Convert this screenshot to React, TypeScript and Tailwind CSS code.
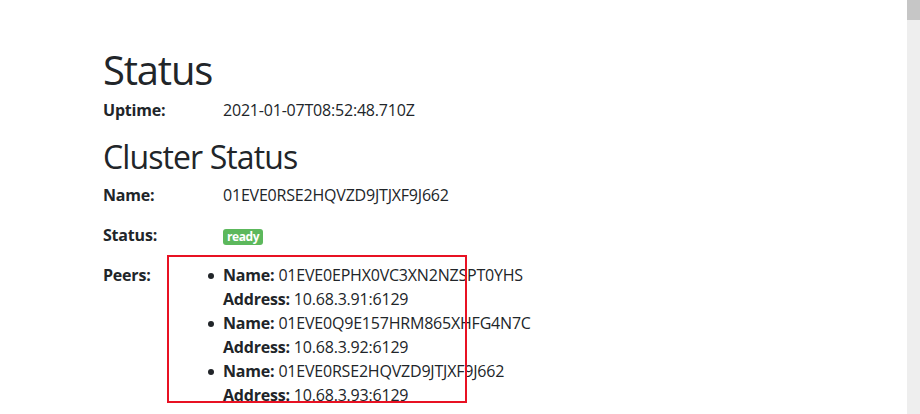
const peers = [
  { name: "01EVE0EPHX0VC3XN2NZSPT0YHS", address: "10.68.3.91:6129" },
  { name: "01EVE0Q9E157HRM865XHFG4N7C", address: "10.68.3.92:6129" },
  { name: "01EVE0RSE2HQVZD9JTJXF9J662", address: "10.68.3.93:6129" },
];

function Row({ label, children, className = "" }: { label: string; children: React.ReactNode; className?: string }) {
  return (
    <div className={`grid grid-cols-[120px_1fr] leading-6 ${className}`}>
      <div className="font-bold">{label}</div>
      <div>{children}</div>
    </div>
  );
}

export default function App() {
  return (
    <div className="flex h-[414px] overflow-hidden bg-white text-[#212529] font-['Open_Sans','Noto_Sans',sans-serif] text-base tracking-[-0.2px]">
      <main className="relative flex-1 pl-[103px] pt-[46px]">
        <h1 className="text-[40px] leading-[48px] font-normal tracking-[-1.2px] mb-[4px]">Status</h1>
        <Row label="Uptime:">2021-01-07T08:52:48.710Z</Row>

        <h2 className="text-[32px] leading-[38px] font-normal tracking-[-0.9px] mt-[16px] mb-[7px]">Cluster Status</h2>
        <Row label="Name:" className="mb-[16px]">01EVE0RSE2HQVZD9JTJXF9J662</Row>
        <Row label="Status:" className="mb-[16px]">
          <span className="inline-block rounded-[3px] bg-[#5cb85c] px-[4px] text-[12px] leading-[16px] font-bold tracking-[-0.4px] text-white align-middle">
            ready
          </span>
        </Row>
        <Row label="Peers:">
          <ul>
            {peers.map((p) => (
              <li key={p.name} className="relative">
                <span className="absolute left-[-15px] top-[10px] w-[6px] h-[6px] rounded-full bg-[#212529]" />
                <div>
                  <b>Name:</b> {p.name}
                </div>
                <div>
                  <b>Address:</b> {p.address}
                </div>
              </li>
            ))}
          </ul>
        </Row>

        {/* annotation box */}
        <div className="absolute left-[167px] top-[255px] w-[300px] h-[148px] border-2 border-[#e81123]" />
      </main>
      <div className="w-[13px] bg-[#eeeeee] flex flex-col">
        <div className="h-[20px] bg-[#c6c6c6]" />
      </div>
    </div>
  );
}
